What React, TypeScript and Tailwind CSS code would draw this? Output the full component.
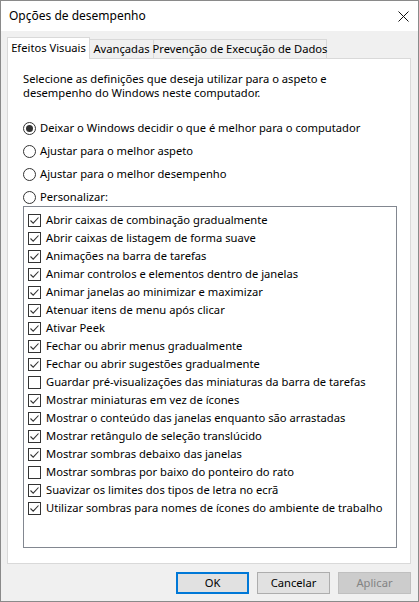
import React from "react";

const items: [string, boolean][] = [
  ["Abrir caixas de combinação gradualmente", true],
  ["Abrir caixas de listagem de forma suave", true],
  ["Animações na barra de tarefas", true],
  ["Animar controlos e elementos dentro de janelas", true],
  ["Animar janelas ao minimizar e maximizar", true],
  ["Atenuar itens de menu após clicar", true],
  ["Ativar Peek", true],
  ["Fechar ou abrir menus gradualmente", true],
  ["Fechar ou abrir sugestões gradualmente", true],
  ["Guardar pré-visualizações das miniaturas da barra de tarefas", false],
  ["Mostrar miniaturas em vez de ícones", true],
  ["Mostrar o conteúdo das janelas enquanto são arrastadas", true],
  ["Mostrar retângulo de seleção translúcido", true],
  ["Mostrar sombras debaixo das janelas", true],
  ["Mostrar sombras por baixo do ponteiro do rato", false],
  ["Suavizar os limites dos tipos de letra no ecrã", true],
  ["Utilizar sombras para nomes de ícones do ambiente de trabalho", true],
];

const Check = ({ on }: { on: boolean }) => (
  <span className="w-[13px] h-[13px] border border-[#333] bg-white flex items-center justify-center shrink-0">
    {on && (
      <svg width="11" height="11" viewBox="0 0 11 11">
        <path d="M1.5 5.5 L4.2 8.2 L9.5 2.5" fill="none" stroke="#333" strokeWidth="1.1" />
      </svg>
    )}
  </span>
);

const Radio = ({ on, label }: { on?: boolean; label: string }) => (
  <div className="flex items-center h-[16px] gap-[4px]">
    <span className="w-[13px] h-[13px] rounded-full border border-[#333] bg-white flex items-center justify-center shrink-0">
      {on && <span className="w-[7px] h-[7px] rounded-full bg-[#333]" />}
    </span>
    <span className="whitespace-nowrap">{label}</span>
  </div>
);

export default function App() {
  return (
    <div
      className="w-[419px] h-[602px] border border-[#8a8a8a] bg-[#f0f0f0] flex flex-col text-[11.2px] text-black"
      style={{ fontFamily: '"Noto Sans", "Liberation Sans", sans-serif' }}
    >
      {/* title bar */}
      <div className="h-[30px] bg-white flex items-center justify-between pl-[8px] pr-[8px]">
        <span className="text-[12px]">Opções de desempenho</span>
        <svg width="11" height="11" viewBox="0 0 11 11" className="mr-[1px]">
          <path d="M0.5 0.5 L10.5 10.5 M10.5 0.5 L0.5 10.5" stroke="#111" strokeWidth="1" />
        </svg>
      </div>

      <div className="flex-1 flex flex-col pl-[6px] pr-[7px] pt-[6px]">
        {/* tabs */}
        <div className="flex items-end h-[21px] whitespace-nowrap">
          <div className="relative z-10 -mb-px h-[22px] w-[83px] bg-white border border-b-0 border-[#d9d9d9] flex items-center justify-center">
            Efeitos Visuais
          </div>
          <div className="h-[19px] w-[64px] border border-l-0 border-b-0 border-[#d9d9d9] flex items-center justify-center">
            Avançadas
          </div>
          <div className="h-[19px] w-[173px] border border-l-0 border-b-0 border-[#d9d9d9] flex items-center justify-center">
            Prevenção de Execução de Dados
          </div>
        </div>

        {/* panel */}
        <div className="h-[506px] bg-white border border-[#d9d9d9] pl-[15px] pr-[13px] pt-[13px]">
          <p className="leading-[14px]">
            Selecione as definições que deseja utilizar para o aspeto e
            <br />
            desempenho do Windows neste computador.
          </p>
          <div className="mt-[20px] flex flex-col gap-[7px]">
            <Radio on label="Deixar o Windows decidir o que é melhor para o computador" />
            <Radio label="Ajustar para o melhor aspeto" />
            <Radio label="Ajustar para o melhor desempenho" />
            <Radio label="Personalizar:" />
          </div>
          <div className="mt-[1px] h-[342px] border border-[#828790] pt-[4px] pl-[4px]">
            {items.map(([t, on]) => (
              <div key={t} className="flex items-center h-[18px] gap-[5px]">
                <Check on={on} />
                <span className="whitespace-nowrap">{t}</span>
              </div>
            ))}
          </div>
        </div>

        {/* buttons */}
        <div className="flex justify-end gap-[8px] mt-[8px]">
          <button className="w-[73px] h-[22px] bg-[#e1e1e1] border-2 border-[#0078d7]">OK</button>
          <button className="w-[73px] h-[22px] bg-[#e1e1e1] border border-[#adadad]">Cancelar</button>
          <button className="w-[73px] h-[22px] bg-[#cccccc] border border-[#bfbfbf] text-[#838383]">Aplicar</button>
        </div>
      </div>
    </div>
  );
}
